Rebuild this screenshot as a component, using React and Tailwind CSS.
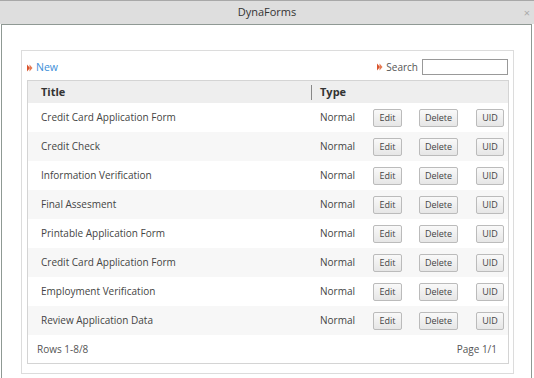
import React from 'react';

const rows = [
  'Credit Card Application Form',
  'Credit Check',
  'Information Verification',
  'Final Assesment',
  'Printable Application Form',
  'Credit Card Application Form',
  'Employment Verification',
  'Review Application Data',
];

const Bullet = () => (
  <svg width="6" height="8" viewBox="0 0 6 8" className="shrink-0">
    <path d="M0 0.5 L3 4 L0 7.5 Z" fill="#d9532c" />
    <path d="M2.5 0.5 L5.5 4 L2.5 7.5 Z" fill="#e67a52" />
  </svg>
);

const Btn = ({ children, w }) => (
  <button
    className={`${w} h-[18px] border border-[#bbbbbb] rounded-[2px] bg-gradient-to-b from-[#f9f9f9] to-[#e6e6e6] text-[9px] text-[#444] leading-none flex items-center justify-center`}
  >
    {children}
  </button>
);

export default function App() {
  return (
    <div className="w-[534px] h-[378px] overflow-hidden bg-white font-['Open_Sans',sans-serif] text-[10px]">
      <div className="h-[24px] border-t border-[#a8a8a8] bg-[#dedede] relative flex items-center justify-center text-[11px] text-[#333]">
        <span>DynaForms</span>
        <span className="absolute right-[4px] top-0 h-full flex items-center text-[11px] text-[#aaa] leading-none">×</span>
      </div>
      <div className="ml-[1px] w-[531px] h-[400px] border border-[#8f9994] bg-white pt-[25px] pl-[19px]">
        <div className="w-[493px] border border-[#dcdcdc] pb-[9px]">
          <div className="h-[29px] px-[5px] flex items-center justify-between">
            <div className="flex items-center gap-[3px] mt-[4px]">
              <Bullet />
              <span className="text-[#3b8ed8] text-[10.5px]">New</span>
            </div>
            <div className="flex items-center gap-[3px] pt-[3px]">
              <Bullet />
              <span className="text-[#555] text-[10px]">Search</span>
              <input className="w-[86px] h-[16px] border border-[#999] ml-[1px] outline-none" />
            </div>
          </div>
          <div className="ml-[5px] w-[482px] border border-[#d4d4d4]">
            <div className="h-[22px] bg-[#eeeeee] flex items-center font-bold text-[#333] text-[11px]">
              <div className="w-[283px] pl-[13px]">Title</div>
              <div className="h-[15px] border-l border-[#888]"></div>
              <div className="pl-[8px]">Type</div>
            </div>
            {rows.map((r, i) => (
              <div
                key={i}
                className={`h-[29px] flex items-center text-[#444] ${i % 2 === 1 ? 'bg-[#f7f7f7]' : 'bg-white'}`}
              >
                <div className="w-[292px] pl-[13px]">{r}</div>
                <div className="w-[53px]">Normal</div>
                <Btn w="w-[29px]">Edit</Btn>
                <div className="w-[17px]"></div>
                <Btn w="w-[39px]">Delete</Btn>
                <div className="w-[18px]"></div>
                <Btn w="w-[28px]">UID</Btn>
              </div>
            ))}
            <div className="h-[28px] flex items-center justify-between pl-[9px] pr-[11px] text-[#555]">
              <span>Rows 1-8/8</span>
              <span>Page 1/1</span>
            </div>
          </div>
        </div>
      </div>
    </div>
  );
}
